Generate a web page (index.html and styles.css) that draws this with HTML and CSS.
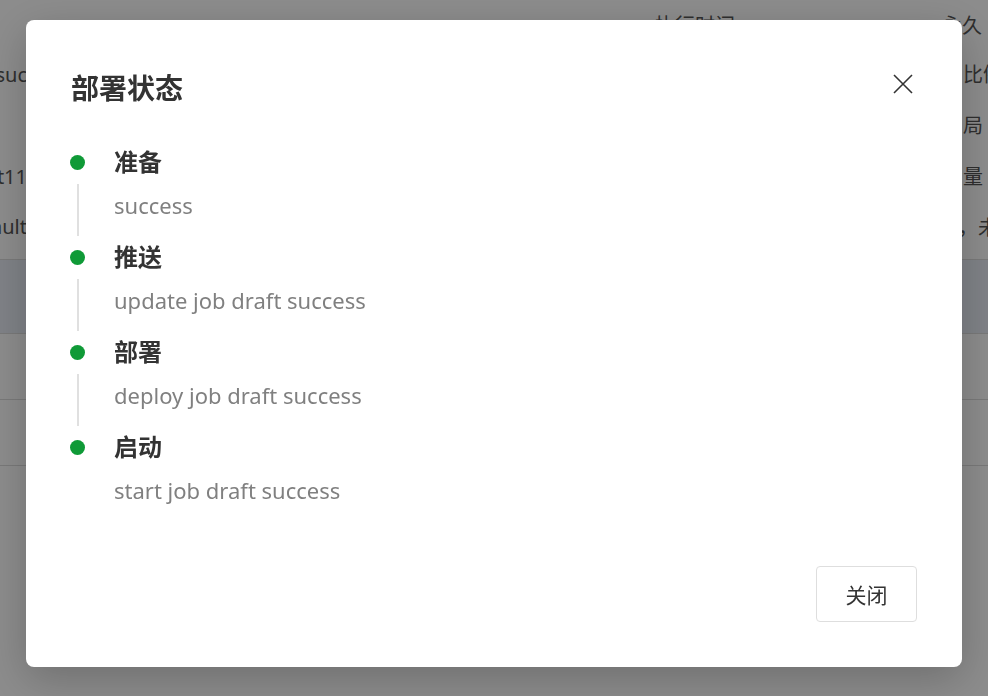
FILE: index.html
```html
<!DOCTYPE html>
<html lang="zh-CN">
<head>
<meta charset="utf-8">
<title>部署状态</title>
<link rel="stylesheet" href="styles.css">
</head>
<body>
<div class="page">
  <div class="form">
    <div class="form-head">
      <span class="col-mid">执行时间</span>
      <span class="col-right">永久</span>
    </div>
    <div class="form-row">
      <div class="col-left"><span>任务名称：test_suc</span></div>
      <span class="col-right right-shift">比例</span>
    </div>
    <div class="form-row">
      <div class="col-left"><span></span></div>
      <span class="col-right right-shift">局</span>
    </div>
    <div class="form-row">
      <div class="col-left"><span>作业名称：test11</span></div>
      <span class="col-right right-shift">量</span>
    </div>
    <div class="form-row">
      <div class="col-left"><span>default</span></div>
      <span class="col-right right-far">，未</span>
    </div>
  </div>
  <div class="table">
    <div class="table-head"></div>
    <div class="table-row"></div>
    <div class="table-row"></div>
  </div>
</div>

<div class="mask"></div>

<div class="modal" role="dialog" aria-label="部署状态">
  <div class="modal-header">
    <h2 class="modal-title">部署状态</h2>
    <button class="modal-close" aria-label="关闭">
      <svg width="20" height="20" viewBox="0 0 20 20"><path d="M1 1 L19 19 M19 1 L1 19" stroke="#333" stroke-width="1.6" fill="none"/></svg>
    </button>
  </div>
  <div class="timeline">
    <div class="step">
      <div class="step-rail"><span class="dot"></span><span class="line"></span></div>
      <div class="step-body">
        <div class="step-title">准备</div>
        <div class="step-desc">success</div>
      </div>
    </div>
    <div class="step">
      <div class="step-rail"><span class="dot"></span><span class="line"></span></div>
      <div class="step-body">
        <div class="step-title">推送</div>
        <div class="step-desc">update job draft success</div>
      </div>
    </div>
    <div class="step">
      <div class="step-rail"><span class="dot"></span><span class="line"></span></div>
      <div class="step-body">
        <div class="step-title">部署</div>
        <div class="step-desc">deploy job draft success</div>
      </div>
    </div>
    <div class="step last">
      <div class="step-rail"><span class="dot"></span></div>
      <div class="step-body">
        <div class="step-title">启动</div>
        <div class="step-desc">start job draft success</div>
      </div>
    </div>
  </div>
  <div class="modal-footer">
    <button class="btn">关闭</button>
  </div>
</div>
</body>
</html>
```

FILE: styles.css
```css
html, body {
  margin: 0;
  padding: 0;
  width: 988px;
  height: 696px;
  overflow: hidden;
  background: #ffffff;
  font-family: "Noto Sans", "Noto Sans CJK SC", sans-serif;
}

.page {
  width: 988px;
  height: 696px;
  color: #555;
  font-size: 20px;
}

.form-head {
  height: 48px;
  display: flex;
  align-items: center;
}
.form-head .col-mid {
  margin-left: 655px;
  width: 287px;
  flex-shrink: 0;
  white-space: nowrap;
}

.form-row {
  height: 51px;
  display: flex;
  align-items: center;
}
.col-left {
  width: 27px;
  overflow: hidden;
  display: flex;
  justify-content: flex-end;
  white-space: nowrap;
  flex-shrink: 0;
}
.col-right {
  white-space: nowrap;
  flex-shrink: 0;
}
.right-shift {
  margin-left: 936px;
}
.right-far {
  margin-left: 931px;
}

.table {
  margin-top: 7px;
  border-top: 1px solid #dcdcdc;
}
.table-head {
  height: 73px;
  background: #e8edf6;
  border-bottom: 1px solid #dcdcdc;
}
.table-row {
  height: 65px;
  border-bottom: 1px solid #dcdcdc;
}

.mask {
  position: fixed;
  inset: 0;
  background: rgba(0, 0, 0, 0.45);
}

.modal {
  position: fixed;
  left: 26px;
  top: 20px;
  width: 936px;
  height: 647px;
  box-sizing: border-box;
  background: #ffffff;
  border-radius: 8px;
  box-shadow: 0 12px 44px rgba(0, 0, 0, 0.22);
  display: flex;
  flex-direction: column;
  color: #333;
}

.modal-header {
  display: flex;
  justify-content: space-between;
  align-items: flex-start;
  padding: 48px 45px 0 45px;
}
.modal-title {
  margin: 0;
  font-size: 28px;
  line-height: 40px;
  font-weight: 600;
  color: #333;
}
.modal-close {
  border: 0;
  background: none;
  padding: 0;
  margin: 6px 4px 0 0;
  width: 20px;
  height: 20px;
  display: flex;
  cursor: pointer;
}

.timeline {
  padding: 38px 45px 0 44px;
  display: flex;
  flex-direction: column;
}
.step {
  display: flex;
  height: 95px;
}
.step-rail {
  width: 44px;
  flex-shrink: 0;
  display: flex;
  flex-direction: column;
}
.dot {
  width: 15px;
  height: 15px;
  border-radius: 50%;
  background: #0f9a37;
  margin-top: 8.5px;
}
.line {
  width: 2px;
  background: #e0e0e0;
  margin: 14.5px 0 5px 6.5px;
  flex: 1;
}
.step-title {
  font-size: 24px;
  line-height: 32px;
  font-weight: 700;
  color: #333;
}
.step-desc {
  margin-top: 11px;
  font-size: 22px;
  line-height: 32px;
  color: #808080;
}

.modal-footer {
  margin-top: auto;
  display: flex;
  justify-content: flex-end;
  padding: 0 45px 45px 45px;
}
.btn {
  width: 101px;
  height: 56px;
  box-sizing: border-box;
  border: 1px solid #dedede;
  border-radius: 4px;
  background: #fff;
  font-family: "Noto Sans", "Noto Sans CJK SC", sans-serif;
  font-size: 21px;
  color: #333;
  cursor: pointer;
}
```
